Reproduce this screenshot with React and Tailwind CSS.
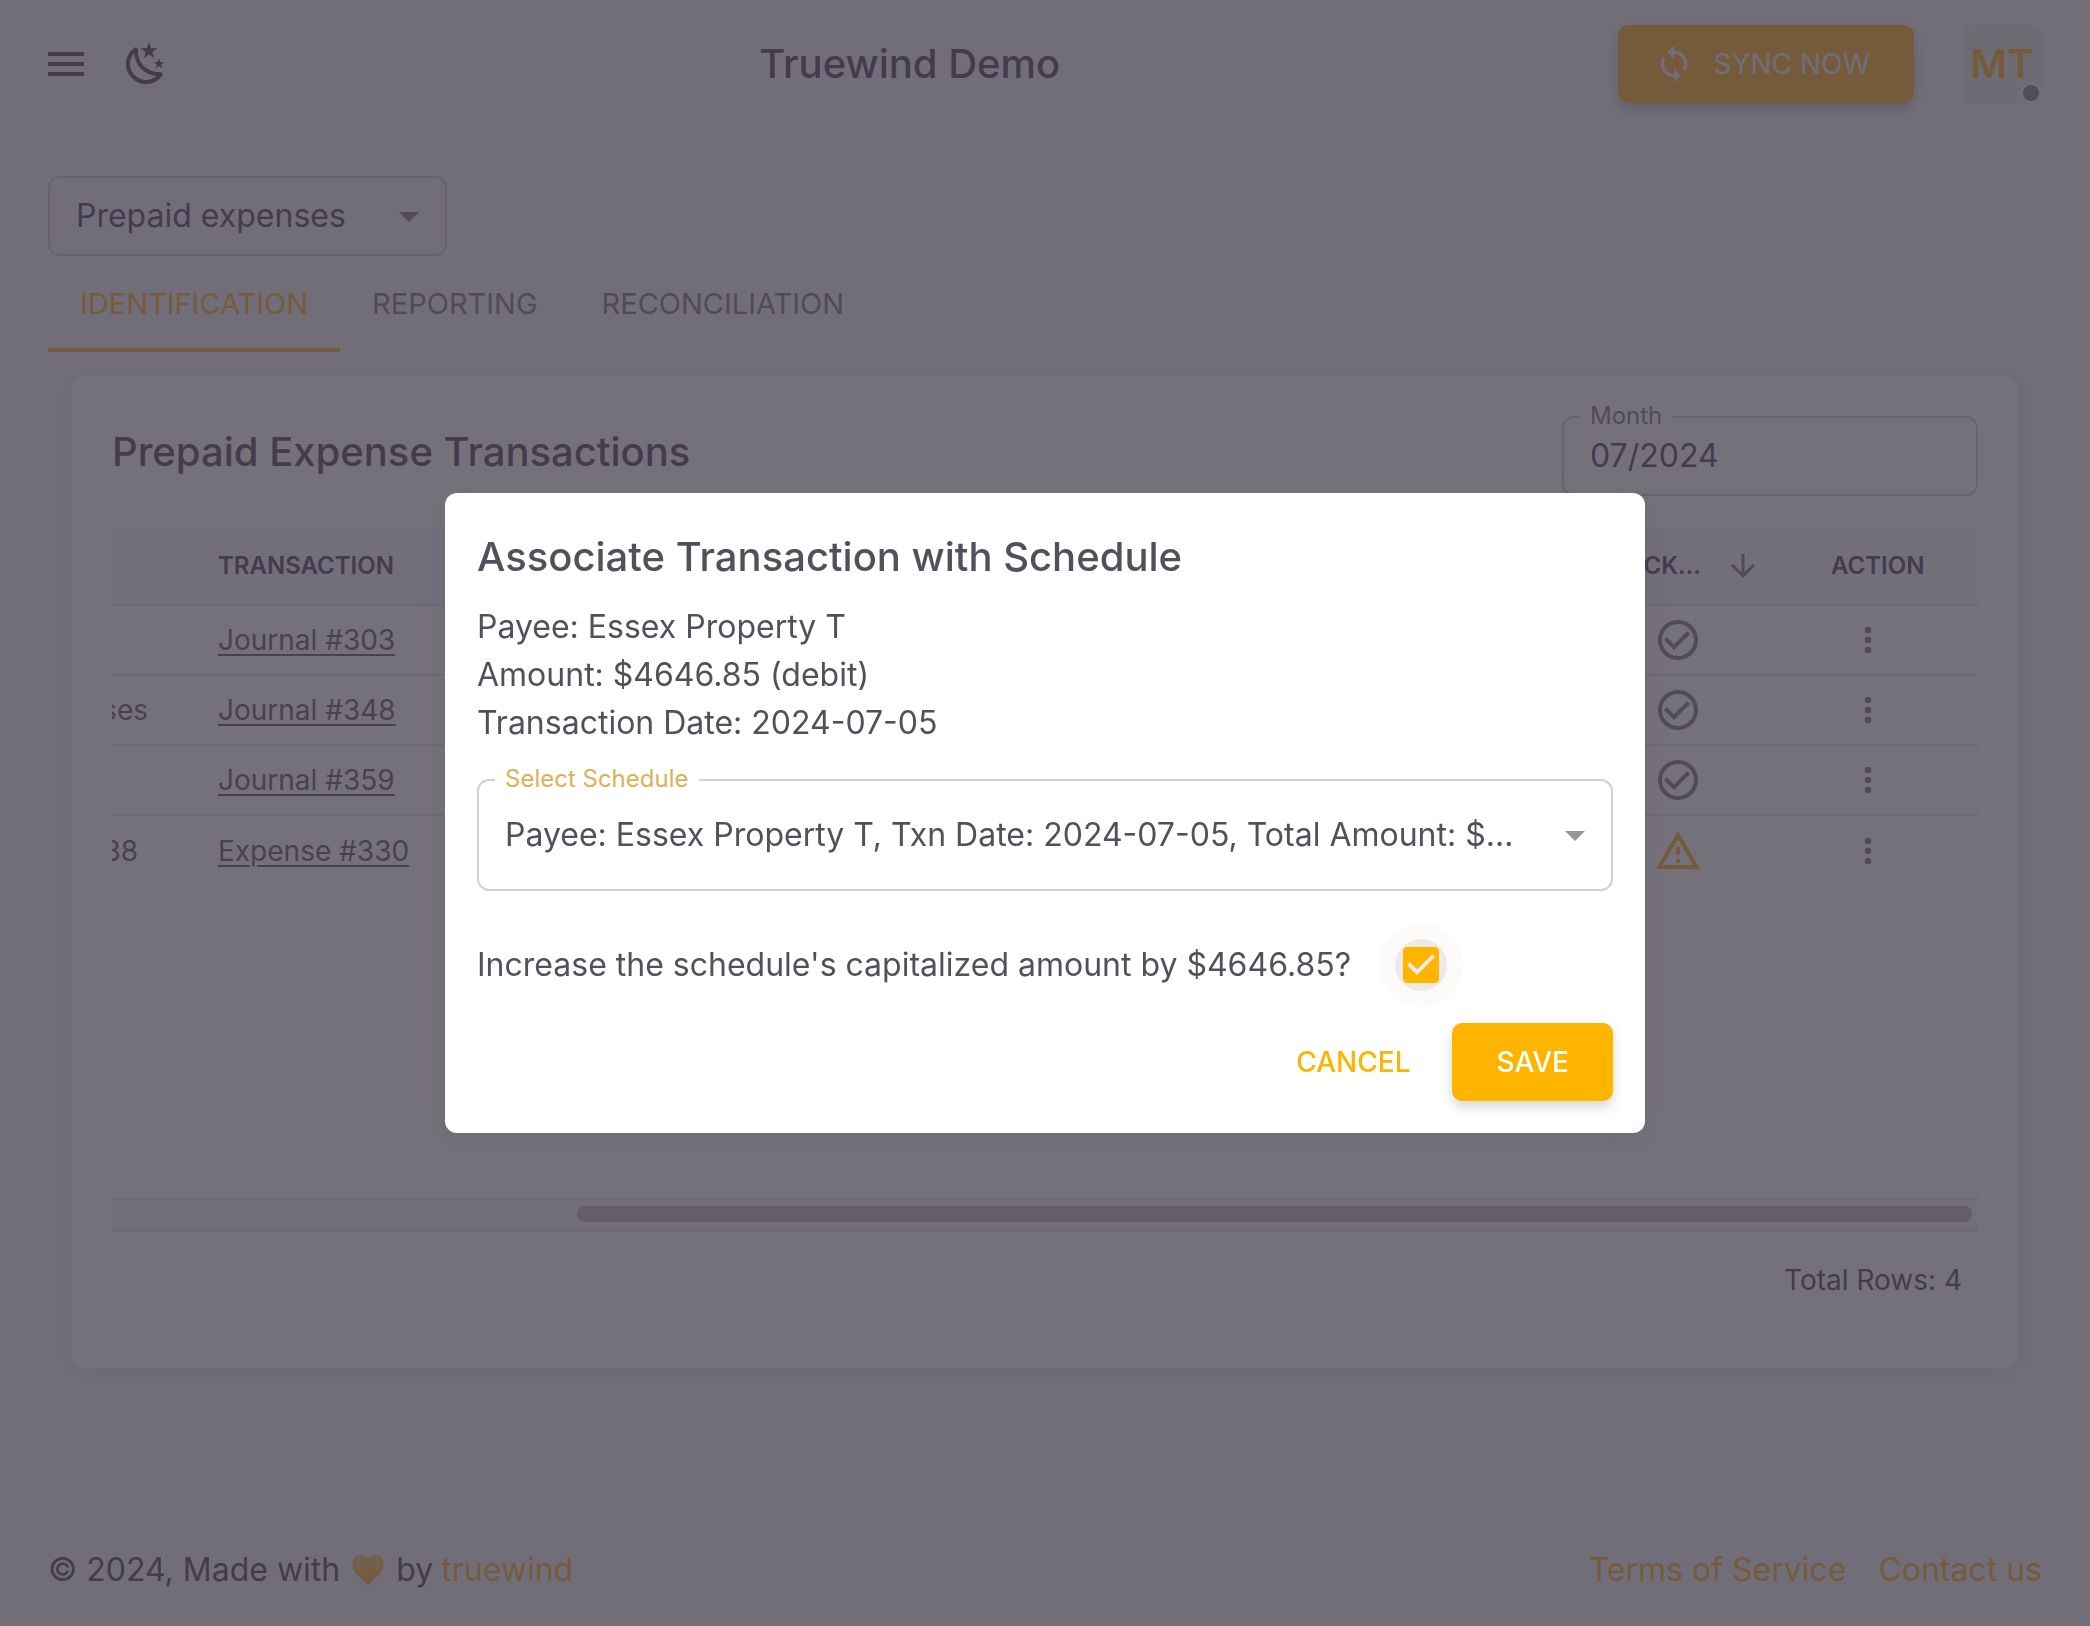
import React, { useState } from 'react';

const transactions = [
  { id: 1, account: '', name: 'Journal #303', tracked: true },
  { id: 2, account: 'ses', name: 'Journal #348', tracked: true },
  { id: 3, account: '', name: 'Journal #359', tracked: true },
  { id: 4, account: '38', name: 'Expense #330', tracked: false },
];

const tabs = ['IDENTIFICATION', 'REPORTING', 'RECONCILIATION'];

function Icon({ d, className }) {
  return (
    <svg viewBox="0 0 24 24" fill="currentColor" aria-hidden="true" className={className}>
      <path d={d} />
    </svg>
  );
}

const icons = {
  menu: 'M3 18h18v-2H3v2zm0-5h18v-2H3v2zm0-7v2h18V6H3z',
  night:
    'M17.75,4.09L15.22,6.03L16.13,9.09L13.5,7.28L10.87,9.09L11.78,6.03L9.25,4.09L12.44,4L13.5,1L14.56,4L17.75,4.09M21.25,11L19.61,12.25L20.2,14.23L18.5,13.06L16.8,14.23L17.39,12.25L15.75,11L17.81,10.95L18.5,9L19.19,10.95L21.25,11M18.97,15.95C19.8,15.87 20.69,17.05 20.16,17.8C19.84,18.25 19.5,18.67 19.08,19.07C15.17,23 8.84,23 4.94,19.07C1.03,15.17 1.03,8.83 4.94,4.93C5.34,4.53 5.76,4.17 6.21,3.85C6.96,3.32 8.14,4.21 8.06,5.04C7.79,7.9 8.75,10.87 10.95,13.06C13.14,15.26 16.1,16.22 18.97,15.95M17.33,17.97C14.5,17.81 11.7,16.64 9.53,14.5C7.36,12.31 6.2,9.5 6.04,6.68C3.23,9.82 3.34,14.64 6.35,17.66C9.37,20.67 14.19,20.78 17.33,17.97Z',
  sync: 'M12 4V1L8 5l4 4V6c3.31 0 6 2.69 6 6 0 1.01-.25 1.97-.7 2.8l1.46 1.46C19.54 15.03 20 13.57 20 12c0-4.42-3.58-8-8-8zm0 14c-3.31 0-6-2.69-6-6 0-1.01.25-1.97.7-2.8L5.24 7.74C4.46 8.97 4 10.43 4 12c0 4.42 3.58 8 8 8v3l4-4-4-4v3z',
  caret: 'M7 10l5 5 5-5z',
  arrowDown: 'M20 12l-1.41-1.41L13 16.17V4h-2v12.17l-5.58-5.59L4 12l8 8 8-8z',
  tracked:
    'M16.59 7.58L10 14.17l-3.59-3.58L5 12l5 5 8-8zM12 2C6.48 2 2 6.48 2 12s4.48 10 10 10 10-4.48 10-10S17.52 2 12 2zm0 18c-4.42 0-8-3.58-8-8s3.58-8 8-8 8 3.58 8 8-3.58 8-8 8z',
  warning: 'M12 5.99L19.53 19H4.47L12 5.99M12 2L1 21h22L12 2zm1 14h-2v2h2v-2zm0-6h-2v4h2v-4z',
  dots: 'M12,16A2,2 0 0,1 14,18A2,2 0 0,1 12,20A2,2 0 0,1 10,18A2,2 0 0,1 12,16M12,10A2,2 0 0,1 14,12A2,2 0 0,1 12,14A2,2 0 0,1 10,12A2,2 0 0,1 12,10M12,4A2,2 0 0,1 14,6A2,2 0 0,1 12,8A2,2 0 0,1 10,6A2,2 0 0,1 12,4Z',
  checkbox:
    'M19 3H5c-1.11 0-2 .9-2 2v14c0 1.1.89 2 2 2h14c1.11 0 2-.9 2-2V5c0-1.1-.89-2-2-2zm-9 14l-5-5 1.41-1.41L10 14.17l7.59-7.59L19 8l-9 9z',
};

function Heart() {
  return (
    <svg viewBox="0 0 32 30" aria-hidden="true" className="mx-1 h-[30px] w-8">
      <defs>
        <linearGradient id="heart" x1="0" y1="0" x2="0" y2="1">
          <stop offset="0" stopColor="#f7cd8a" />
          <stop offset="0.5" stopColor="#ffb957" />
          <stop offset="1" stopColor="#ffb02d" />
        </linearGradient>
      </defs>
      <path
        fill="url(#heart)"
        stroke="#ffb02d"
        strokeWidth="1.5"
        d="M16 29C13.500 25.500 1 18.500 1 9C1 4 4.300 1 8.500 1C12 1 14.800 3 16 6C17.200 3 20 1 23.500 1C27.700 1 31 4 31 9C31 18.500 18.500 25.500 16 29Z"
      />
    </svg>
  );
}

function Header() {
  return (
    <header className="flex h-32 items-center px-12">
      <div className="-ml-2 flex items-center gap-3.5">
        <button type="button" aria-label="Open menu" className="flex h-20 w-13 items-center justify-center">
          <Icon d={icons.menu} className="h-12 w-12 shrink-0" />
        </button>
        <button type="button" aria-label="Toggle theme" className="flex h-20 w-20 items-center justify-center">
          <Icon d={icons.night} className="h-12 w-12" />
        </button>
      </div>
      <h1 className="flex-1 pl-4 text-center text-[40px] leading-[48px] font-medium">Truewind Demo</h1>
      <button
        type="button"
        className="flex h-[78px] items-center gap-5 rounded-[10px] bg-[#ffb42d] pr-11 pl-9 text-[28px] text-[#f4f5fa] shadow-[0_6px_12px_rgba(58,53,65,0.25)]"
      >
        <Icon d={icons.sync} className="h-10 w-10" />
        SYNC NOW
      </button>
      <button
        type="button"
        aria-label="Account MT"
        className="relative ml-12 h-20 w-20 rounded-xl bg-[#ebebe9] text-[40px] font-semibold text-[#ffb42d]"
      >
        MT
        <span className="absolute right-0 bottom-0 h-[22px] w-[22px] rounded-full border-[3px] border-[#f4f5fa] bg-[#8a8d93]" />
      </button>
    </header>
  );
}

function TransactionsTable() {
  return (
    <div className="mt-8 flex flex-1 flex-col">
      <table className="w-full table-fixed border-collapse text-left text-[28px]">
        <colgroup>
          <col className="w-[86px]" />
          <col className="w-[240px]" />
          <col />
          <col className="w-[220px]" />
          <col className="w-[167px]" />
        </colgroup>
        <thead>
          <tr className="h-[77px] border-b-2 border-[#e4e2e9] bg-[#f4f5ff] text-2xl">
            <td />
            <th className="px-5 font-semibold">TRANSACTION</th>
            <td />
            <th className="font-semibold">
              <div className="flex items-center justify-end gap-6 pr-[50px]">
                TRACK...
                <Icon d={icons.arrowDown} className="h-9 w-9 text-[#85808a]" />
              </div>
            </th>
            <th className="px-5 font-semibold">ACTION</th>
          </tr>
        </thead>
        <tbody>
          {transactions.map((row) => (
            <tr key={row.id} className="h-[70px] border-b-2 border-[#e4e2e9] text-[#6b5e78] last:border-b-0">
              <td className="p-0">
                <div className="flex max-w-9 justify-end overflow-hidden">
                  <span className={row.tracked ? 'shrink-0' : 'shrink-0 pr-[10px]'}>{row.account}</span>
                </div>
              </td>
              <td className="px-5 py-0 whitespace-nowrap">
                <a href="#" className="underline decoration-2 underline-offset-4">{row.name}</a>
              </td>
              <td />
              <td className="py-0 pr-[109px]">
                {row.tracked ? (
                  <Icon d={icons.tracked} className="ml-auto h-12 w-12 text-[#85808a]" />
                ) : (
                  <Icon d={icons.warning} className="ml-auto h-12 w-12 text-[#ffb42d]" />
                )}
              </td>
              <td className="py-0 pl-[37px]">
                <button type="button" aria-label={`Actions for ${row.name}`} className="block text-[#85808a]">
                  <Icon d={icons.dots} className="h-10 w-10" />
                </button>
              </td>
            </tr>
          ))}
        </tbody>
      </table>

      <div className="mt-auto border-t-2 border-b-4 border-[#e4e2e9] bg-[#f6f6fd] py-[6px] pr-[6px]">
        <div className="ml-[25%] h-4 rounded-full bg-[#c3bfc6]" />
      </div>
      <div className="flex h-24 items-center justify-end pr-4 text-[28px]">Total Rows: 4</div>
    </div>
  );
}

function AssociateDialog() {
  const [increase, setIncrease] = useState(true);

  return (
    <div className="fixed inset-0 flex items-center justify-center bg-[rgba(58,53,65,0.7)]">
      <div
        role="dialog"
        aria-modal="true"
        aria-labelledby="dialog-title"
        className="w-full max-w-[1200px] rounded-xl bg-white p-8 text-[32px] leading-[48px] text-[#544f5a] shadow-[0_8px_24px_rgba(88,83,110,0.2)]"
      >
        <h2 id="dialog-title" className="text-[40px] leading-[64px] font-medium">
          Associate Transaction with Schedule
        </h2>
        <div className="mt-3.5">
          <p>Payee: Essex Property T</p>
          <p>Amount: $4646.85 (debit)</p>
          <p>Transaction Date: 2024-07-05</p>
        </div>

        <div className="relative mt-8">
          <label htmlFor="schedule" className="absolute -top-4 left-[18px] bg-white px-[10px] text-2xl leading-[32px] text-[#e0b054]">
            Select Schedule
          </label>
          <select
            id="schedule"
            className="h-28 w-full appearance-none truncate rounded-xl border-2 border-[#d2d1d4] bg-white pr-[80px] pl-[26px]"
          >
            <option>Payee: Essex Property T, Txn Date: 2024-07-05, Total Amount: $4646.85</option>
          </select>
          <Icon d={icons.caret} className="pointer-events-none absolute top-8 right-[14px] h-12 w-12 text-[#98959c]" />
        </div>

        <div className="mt-8 flex items-center">
          <label htmlFor="increase">Increase the schedule's capitalized amount by $4646.85?</label>
          <span className="relative ml-7 flex h-[84px] w-[84px] items-center justify-center rounded-full bg-[#fcfbfa]">
            <span className="flex h-[52px] w-[52px] items-center justify-center rounded-full bg-[#efeae5]">
              {increase ? (
                <Icon d={icons.checkbox} className="h-12 w-12 text-[#ffb400]" />
              ) : (
                <span className="h-9 w-9 rounded border-4 border-[#98959c]" />
              )}
            </span>
            <input
              id="increase"
              type="checkbox"
              checked={increase}
              onChange={(e) => setIncrease(e.target.checked)}
              className="absolute inset-0 h-full w-full cursor-pointer opacity-0"
            />
          </span>
        </div>

        <div className="mt-4 flex items-center justify-end text-[28px] font-medium">
          <button type="button" className="h-[78px] px-[42px] text-[#ffb400]">CANCEL</button>
          <button
            type="button"
            className="h-[78px] rounded-[10px] bg-[#ffb400] px-11 text-white shadow-[0_6px_12px_rgba(58,53,65,0.2)]"
          >
            SAVE
          </button>
        </div>
      </div>
    </div>
  );
}

export default function App() {
  return (
    <div className="flex min-h-screen flex-col bg-[#f4f5fa] font-[Inter,sans-serif] text-[#5a4a6c] [font-optical-sizing:none]">
      <Header />

      <main className="flex flex-1 flex-col px-12 pt-12 pb-[146px]">
        <div className="relative w-[399px]">
          <select
            aria-label="Section"
            className="h-20 w-full appearance-none rounded-xl border-2 border-[#d2d0d4] pl-[26px] text-[32px]"
          >
            <option>Prepaid expenses</option>
          </select>
          <Icon d={icons.caret} className="pointer-events-none absolute top-4 right-[14px] h-12 w-12 text-[#85808a]" />
        </div>

        <div role="tablist" className="flex h-24 text-[29px] text-[#85808a]">
          {tabs.map((tab, i) => (
            <button
              key={tab}
              type="button"
              role="tab"
              aria-selected={i === 0}
              className={i === 0 ? 'border-b-4 border-[#ffb42d] px-8 pt-1 text-[#ffb42d]' : 'px-8'}
            >
              {tab}
            </button>
          ))}
        </div>

        <section className="mx-6 mt-6 flex flex-1 flex-col rounded-xl bg-white p-10 shadow-[0_4px_20px_rgba(58,53,65,0.08)]">
          <div className="flex h-20 items-start justify-between">
            <h2 className="text-[40px] leading-[72px] font-medium">Prepaid Expense Transactions</h2>
            <div className="relative w-[416px]">
              <label htmlFor="month" className="absolute -top-4 left-[18px] bg-white px-[10px] text-2xl leading-[32px] text-[#85808a]">
                Month
              </label>
              <input
                id="month"
                type="text"
                defaultValue="07/2024"
                className="h-20 w-full rounded-xl border-2 border-[#d2d0d4] px-[26px] pb-0.5 text-[32px]"
              />
            </div>
          </div>
          <TransactionsTable />
        </section>
      </main>

      <footer className="flex h-28 items-center justify-between px-12 text-[32px]">
        <p className="flex items-center gap-2">
          © 2024, Made with
          <Heart />
          by
          <a href="#" className="text-[#ffb42d]">truewind</a>
        </p>
        <nav className="flex gap-8 text-[#ffb42d]">
          <a href="#">Terms of Service</a>
          <a href="#">Contact us</a>
        </nav>
      </footer>

      <AssociateDialog />
    </div>
  );
}
